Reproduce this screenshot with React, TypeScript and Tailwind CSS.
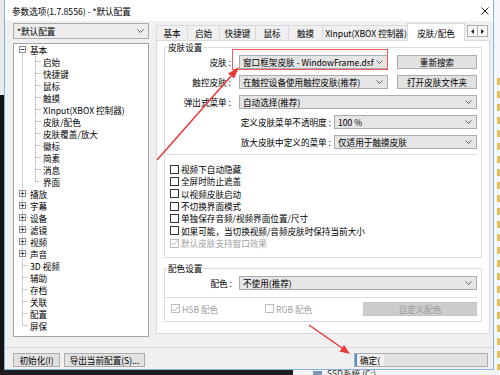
import React from "react";

const FONT = "font-['Noto_Sans_CJK_SC','Microsoft_YaHei',sans-serif]";

function Chevron() {
  return (
    <svg width="7" height="4" viewBox="0 0 7 4" className="shrink-0">
      <polyline points="0.5,0.5 3.5,3.5 6.5,0.5" fill="none" stroke="#5a5a5a" strokeWidth="1" />
    </svg>
  );
}

function Combo({ text, className }: { text: string; className: string }) {
  return (
    <div className={`flex items-center justify-between border border-[#acacac] bg-[#e5e5e5] pl-[3px] pr-[4px] ${className}`}>
      <span className="whitespace-nowrap overflow-hidden">{text}</span>
      <Chevron />
    </div>
  );
}

function Btn({ text, className, disabled = false }: { text: string; className: string; disabled?: boolean }) {
  return (
    <div
      className={`flex items-center justify-center h-[14px] border whitespace-nowrap ${
        disabled ? "border-[#c4c4c4] bg-[#cccccc] text-[#9d9d9d]" : "border-[#adadad] bg-[#e1e1e1]"
      } ${className}`}
    >
      {text}
    </div>
  );
}

function Check({ label, checked = false, disabled = false, className = "" }: { label: string; checked?: boolean; disabled?: boolean; className?: string }) {
  return (
    <div className={`flex items-center h-[12.33px] ${className}`}>
      <span
        className={`w-[9px] h-[9px] border ${disabled ? "border-[#bcbcbc]" : "border-[#333333]"} bg-white flex items-center justify-center shrink-0`}
      >
        {checked && (
          <svg width="7" height="6" viewBox="0 0 7 6">
            <polyline points="0.5,3 2.5,5 6.5,0.5" fill="none" stroke={disabled ? "#b4b4b4" : "#222"} strokeWidth="1" />
          </svg>
        )}
      </span>
      <span className={`ml-[2px] whitespace-nowrap ${disabled ? "text-[#a0a0a0]" : ""}`}>{label}</span>
    </div>
  );
}

type TreeItem = { t: string; lvl: 0 | 1; box?: "+" | "-" };
const tree: TreeItem[] = [
  { t: "基本", lvl: 0, box: "-" },
  { t: "启始", lvl: 1 },
  { t: "快捷键", lvl: 1 },
  { t: "鼠标", lvl: 1 },
  { t: "触摸", lvl: 1 },
  { t: "XInput(XBOX 控制器)", lvl: 1 },
  { t: "皮肤/配色", lvl: 1 },
  { t: "皮肤覆盖/放大", lvl: 1 },
  { t: "徽标", lvl: 1 },
  { t: "简素", lvl: 1 },
  { t: "消息", lvl: 1 },
  { t: "界面", lvl: 1 },
  { t: "播放", lvl: 0, box: "+" },
  { t: "字幕", lvl: 0, box: "+" },
  { t: "设备", lvl: 0, box: "+" },
  { t: "滤镜", lvl: 0, box: "+" },
  { t: "视频", lvl: 0, box: "+" },
  { t: "声音", lvl: 0, box: "+" },
  { t: "3D 视频", lvl: 0 },
  { t: "辅助", lvl: 0 },
  { t: "存档", lvl: 0 },
  { t: "关联", lvl: 0 },
  { t: "配置", lvl: 0 },
  { t: "屏保", lvl: 0 },
];

function TreeLines() {
  const dot = { stroke: "#a0a0a0", strokeWidth: 1, strokeDasharray: "1 1" };
  const cy = (i: number) => i * 12 + 5.5;
  return (
    <svg width="134" height="292" className="absolute left-0 top-0">
      <line x1="8.5" y1={cy(0)} x2="8.5" y2={cy(23)} {...dot} />
      <line x1="21.5" y1="12" x2="21.5" y2={cy(11)} {...dot} />
      {tree.map((it, i) =>
        it.lvl === 1 ? (
          <line key={"h" + i} x1="21.5" y1={cy(i)} x2="27" y2={cy(i)} {...dot} />
        ) : (
          <line key={"h" + i} x1="8.5" y1={cy(i)} x2="14" y2={cy(i)} {...dot} />
        )
      )}
      {tree.map((it, i) =>
        it.box ? (
          <g key={"b" + i}>
            <rect x="5.5" y={cy(i) - 3} width="6" height="6" fill="#fff" stroke="#8d8d8d" strokeWidth="1" />
            <line x1="6.5" y1={cy(i)} x2="10.5" y2={cy(i)} stroke="#3a4a6a" strokeWidth="1" />
            {it.box === "+" && <line x1="8.5" y1={cy(i) - 2} x2="8.5" y2={cy(i) + 2} stroke="#3a4a6a" strokeWidth="1" />}
          </g>
        ) : null
      )}
    </svg>
  );
}

const tabs = [
  { t: "基本", w: "w-[32px]" },
  { t: "启始", w: "w-[33px]" },
  { t: "快捷键", w: "w-[37px]" },
  { t: "鼠标", w: "w-[34px]" },
  { t: "触摸", w: "w-[35px]" },
  { t: "XInput(XBOX 控制器)", w: "w-[88px]" },
];

export default function App() {
  return (
    <div className={`relative w-[500px] h-[375px] overflow-hidden bg-[#1b1b1b] ${FONT} text-[8.6px] leading-[12px] text-black`}>
      <div className="flex h-[370px]">
        {/* left desktop strip */}
        <div className="w-[4px] flex flex-col">
          <div className="h-[95px] bg-[#e9e9e9]" />
          <div className="flex-1 bg-[#141414]" />
        </div>

        {/* window */}
        <div className="w-[490px] flex flex-col border-x border-b border-[#86b3e3] bg-[#f0f0f0]">
          <div className="h-[21px] shrink-0 bg-white flex items-center justify-between pl-[7px] pr-[4px]">
            <span>参数选项(1.7.8556) - *默认配置</span>
            <svg width="8" height="8" viewBox="0 0 8 8">
              <line x1="0.5" y1="0.5" x2="7.5" y2="7.5" stroke="#222" strokeWidth="1" />
              <line x1="7.5" y1="0.5" x2="0.5" y2="7.5" stroke="#222" strokeWidth="1" />
            </svg>
          </div>

          <div className="flex pt-[2px] pl-[8px] gap-[7px]">
            {/* left column */}
            <div className="w-[136px] flex flex-col">
              <Combo text="*默认配置" className="h-[16px] bg-[#ececec] pl-[2px]" />
              <div className="mt-[4px] h-[294px] border border-[#a0a4ab] bg-white relative">
                <TreeLines />
                <div className="relative flex flex-col">
                  {tree.map((it, i) => (
                    <div key={i} className={`h-[12px] flex items-center whitespace-nowrap ${it.lvl === 1 ? "pl-[29px]" : "pl-[16px]"}`}>
                      {it.t}
                    </div>
                  ))}
                </div>
              </div>
            </div>

            {/* right column */}
            <div className="w-[334px] flex flex-col">
              <div className="h-[17px] flex items-end relative z-10">
                {tabs.map((tb, i) => (
                  <div
                    key={i}
                    className={`h-[15px] ${tb.w} ${i > 0 ? "-ml-px" : ""} flex items-center justify-center border border-b-0 border-[#d9d9d9] bg-[#f0f0f0] whitespace-nowrap`}
                  >
                    {tb.t}
                  </div>
                ))}
                <div className="h-[18px] w-[58px] -ml-[3px] -mb-px flex items-center justify-center border border-b-0 border-[#d9d9d9] bg-white whitespace-nowrap relative">
                  皮肤/配色
                </div>
                <div className="self-start mt-[2px] ml-[2px] flex">
                  <div className="w-[11px] h-[12px] border border-[#adadad] bg-[#f7f7f7] flex items-center justify-center">
                    <svg width="3" height="5" viewBox="0 0 3 5"><polygon points="3,0 0,2.5 3,5" fill="#222" /></svg>
                  </div>
                  <div className="w-[11px] h-[12px] -ml-px border border-[#adadad] bg-[#f7f7f7] flex items-center justify-center">
                    <svg width="3" height="5" viewBox="0 0 3 5"><polygon points="0,0 3,2.5 0,5" fill="#222" /></svg>
                  </div>
                </div>
              </div>

              <div className="h-[294px] border border-[#d9d9d9] bg-white px-[7px]">
                {/* group 1 */}
                <fieldset className="border border-[#dcdcdc] h-[217px] min-w-0">
                  <legend className="ml-[2px] px-[1px] leading-[12px]">皮肤设置</legend>
                  <div className="flex flex-col gap-[6px] pt-[2px]">
                    <div className="flex items-center">
                      <span className="w-[66px] text-right whitespace-nowrap">皮肤 :</span>
                      <Combo text="窗口框架皮肤 - WindowFrame.dsf" className="h-[14px] ml-[8px] w-[149px]" />
                      <Btn text="重新搜索" className="ml-[9px] w-[80px]" />
                    </div>
                    <div className="flex items-center">
                      <span className="w-[66px] text-right whitespace-nowrap">触控皮肤 :</span>
                      <Combo text="在触控设备使用触控皮肤(推荐)" className="h-[14px] ml-[8px] w-[149px]" />
                      <Btn text="打开皮肤文件夹" className="ml-[9px] w-[80px]" />
                    </div>
                    <div className="flex items-center">
                      <span className="w-[66px] text-right whitespace-nowrap">弹出式菜单 :</span>
                      <Combo text="自动选择(推荐)" className="h-[14px] ml-[8px] w-[238px]" />
                    </div>
                    <div className="flex items-center">
                      <span className="w-[166px] text-right whitespace-nowrap">定义皮肤菜单不透明度 :</span>
                      <Combo text="100 %" className="h-[14px] ml-[3px] w-[143px]" />
                    </div>
                    <div className="flex items-center">
                      <span className="w-[166px] text-right whitespace-nowrap">放大皮肤中定义的菜单 :</span>
                      <Combo text="仅适用于触摸皮肤" className="h-[14px] ml-[3px] w-[143px]" />
                    </div>
                  </div>
                  <div className="mt-[5px] mr-[4px] h-px bg-[#dcdcdc]" />
                  <div className="mt-[8px] ml-[5px] flex flex-col">
                    <Check label="视频下自动隐藏" />
                    <Check label="全屏时防止遮盖" />
                    <Check label="以视频皮肤启动" />
                    <Check label="不切换界面模式" />
                    <Check label="单独保存音频/视频界面位置/尺寸" />
                    <Check label="如果可能，当切换视频/音频皮肤时保持当前大小" />
                    <Check label="默认皮肤支持窗口效果" checked disabled />
                  </div>
                </fieldset>

                {/* group 2 */}
                <fieldset className="mt-[4px] border border-[#dcdcdc] h-[60px] min-w-0">
                  <legend className="ml-[2px] px-[1px] leading-[12px]">配色设置</legend>
                  <div className="pt-[2px] flex items-center">
                    <span className="w-[67px] text-right whitespace-nowrap">配色 :</span>
                    <Combo text="不使用(推荐)" className="h-[14px] ml-[7px] w-[238px]" />
                  </div>
                  <div className="mt-[7px] mr-[4px] h-px bg-[#dcdcdc]" />
                  <div className="mt-[4px] flex items-center h-[14px]">
                    <Check label="HSB 配色" checked disabled className="ml-[6px] w-[94px]" />
                    <Check label="RGB 配色" disabled className="w-[98px]" />
                    <Btn text="自定义配色" disabled className="w-[114px]" />
                  </div>
                </fieldset>
              </div>
            </div>
          </div>

          {/* footer */}
          <div className="mt-[10px] flex-1 border-t border-[#dadada] flex items-start pt-[5px] pl-[8px] pr-[5px]">
            <Btn text="初始化(I)" className="w-[47px]" />
            <Btn text="导出当前配置(S)..." className="ml-[4px] w-[81px]" />
            <div className="ml-auto w-[134px] h-[14px] border border-[#adadad] bg-[#e1e1e1] flex">
              <span className="w-[29px] h-full border-l-2 border-[#4a90d9] bg-[#f0f0f0] pl-[3px] flex items-center whitespace-nowrap overflow-hidden">
                确定(
              </span>
            </div>
          </div>
        </div>

        {/* right desktop strip */}
        <div className="w-[6px] bg-[#f4f6f9] flex flex-col pt-[78px] gap-[6px]">
          {Array.from({ length: 23 }).map((_, i) => (
            <div key={i} className="ml-[3px] w-[3px] h-[7px] bg-[#e6bf55] shrink-0" />
          ))}
        </div>
      </div>

      {/* bottom desktop strip */}
      <div className="flex h-[5px]">
        <div className="w-[293px] bg-[#1e1e1e]" />
        <div className="flex-1 bg-[#f3f3f3] flex items-start overflow-hidden">
          <div className="ml-[20px] mt-[1px] w-[9px] h-[4px] bg-[#7d95b5]" />
          <span className="ml-[5px] -mt-[2px] leading-[10px] text-[#333] whitespace-nowrap">SSD系统 (C:)</span>
        </div>
      </div>

      {/* red annotations */}
      <svg width="500" height="375" className="absolute left-0 top-0 pointer-events-none">
        <rect x="232.5" y="49.5" width="155" height="20" fill="none" stroke="#ef5a5a" strokeWidth="1" />
        <line x1="157" y1="160" x2="231" y2="76" stroke="#e8383a" strokeWidth="1.5" />
        <polygon points="239,67 234.1,78.6 228.1,73.4" fill="#e8383a" />
        <line x1="309" y1="325" x2="342" y2="348" stroke="#e8383a" strokeWidth="1.5" />
        <polygon points="350,354 339.5,351.5 344.1,344.9" fill="#e8383a" />
      </svg>
    </div>
  );
}
